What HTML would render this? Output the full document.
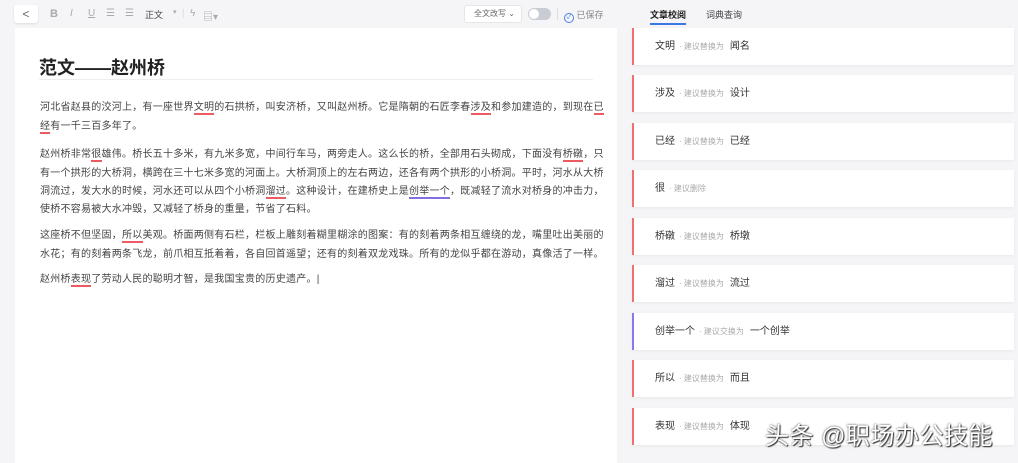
<!DOCTYPE html>
<html><head><meta charset="utf-8"><style>
*{margin:0;padding:0;box-sizing:border-box}
body{width:1018px;height:463px;background:#f5f5f7;font-family:"Liberation Sans","Noto Sans CJK SC",sans-serif;color:#333;position:relative;overflow:hidden}
.tb{position:absolute;top:0;left:0;height:28px;width:620px}
.back{position:absolute;left:14px;top:5px;width:24px;height:18px;background:#fff;border-radius:3px;box-shadow:0 1px 2px rgba(0,0,0,.1);font-size:12px;color:#666;text-align:center;line-height:18px}
.ti{position:absolute;top:8px;font-size:10px;color:#aaa}
.ed{position:absolute;left:15px;top:28px;width:602px;height:435px;background:#fff}
h1{position:absolute;left:24px;top:26px;font-size:18px;font-weight:bold;color:#222}
.hr{position:absolute;left:24px;right:24px;top:51px;border-top:1px solid #eee}
.t{position:absolute;left:25px;font-size:10px;letter-spacing:0.25px;color:#444;white-space:nowrap;line-height:14px}
u{text-decoration:none;border-bottom:2px solid #ee5a62}
u.p{border-color:#8070e0}
.card{position:absolute;left:632px;width:382px;height:37px;background:#fff;border-left:2px solid #f07070;box-shadow:0 1px 3px rgba(0,0,0,.06);font-size:10px;line-height:37px;padding-left:21px;color:#333}
.card.pu{border-color:#8877ee}
.card s{text-decoration:none;color:#aaa;font-size:8px;margin:0 6px 0 4px}
.wm{position:absolute;left:765px;top:416px;font-size:24px;color:#fff;text-shadow:1px 1px 1px #333,0 0 2px #333;letter-spacing:0.5px}
</style></head><body>
<div class="tb">
<div class="back">&lt;</div>
<span class="ti" style="left:50px;font-weight:bold;font-size:11px">B</span>
<span class="ti" style="left:70px;font-style:italic">I</span>
<span class="ti" style="left:88px;text-decoration:underline">U</span>
<span class="ti" style="left:106px">☰</span>
<span class="ti" style="left:125px">☰</span>
<span class="ti" style="left:145px;color:#444;font-size:9px">正文</span>
<span class="ti" style="left:173px;font-size:7px">▾</span>
<span class="ti" style="left:182px;color:#ddd">|</span>
<span class="ti" style="left:190px">ϟ</span>
<span class="ti" style="left:203px">▤▾</span>
</div>
<div style="position:absolute;left:464px;top:5px;width:58px;height:18px;background:#fff;border:1px solid #e6e6e6;border-radius:3px;font-size:8px;color:#666;line-height:16px;padding-left:9px">全文改写 ⌄</div>
<div style="position:absolute;left:528px;top:8px;width:23px;height:12px;background:#c9ccd3;border-radius:6px"><div style="position:absolute;left:1px;top:1px;width:10px;height:10px;border-radius:50%;background:#fff"></div></div>
<div style="position:absolute;left:557px;top:8px;height:12px;border-left:1px solid #ddd"></div>
<div style="position:absolute;left:564px;top:8px;font-size:9px;color:#888"><span style="display:inline-block;width:10px;height:10px;border:1px solid #4a7fe0;border-radius:50%;font-size:7px;color:#4a7fe0;text-align:center;line-height:8px;vertical-align:-1px">✓</span> 已保存</div>
<div style="position:absolute;left:650px;top:8px;font-size:9px;color:#222;font-weight:bold;border-bottom:2px solid #3b78e7;padding-bottom:2px">文章校阅</div>
<div style="position:absolute;left:706px;top:8px;font-size:9px;color:#444">词典查询</div>
<div class="ed">
<h1>范文——赵州桥</h1><div class="hr"></div>
<div class="t" style="top:73px">河北省赵县的洨河上，有一座世界<u>文明</u>的石拱桥，叫安济桥，又叫赵州桥。它是隋朝的石匠李春<u>涉及</u>和参加建造的，到现在<u>已</u></div>
<div class="t" style="top:92px"><u>经</u>有一千三百多年了。</div>
<div class="t" style="top:120px">赵州桥非常<u>很</u>雄伟。桥长五十多米，有九米多宽，中间行车马，两旁走人。这么长的桥，全部用石头砌成，下面没有<u>桥礅</u>，只</div>
<div class="t" style="top:139px">有一个拱形的大桥洞，横跨在三十七米多宽的河面上。大桥洞顶上的左右两边，还各有两个拱形的小桥洞。平时，河水从大桥</div>
<div class="t" style="top:157px">洞流过，发大水的时候，河水还可以从四个小桥洞<u>溜过</u>。这种设计，在建桥史上是<u class="p">创举一个</u>，既减轻了流水对桥身的冲击力，</div>
<div class="t" style="top:175px">使桥不容易被大水冲毁，又减轻了桥身的重量，节省了石料。</div>
<div class="t" style="top:201px">这座桥不但坚固，<u>所以</u>美观。桥面两侧有石栏，栏板上雕刻着糊里糊涂的图案：有的刻着两条相互缠绕的龙，嘴里吐出美丽的</div>
<div class="t" style="top:220px">水花；有的刻着两条飞龙，前爪相互抵着着，各自回首遥望；还有的刻着双龙戏珠。所有的龙似乎都在游动，真像活了一样。</div>
<div class="t" style="top:245px">赵州桥<u>表现</u>了劳动人民的聪明才智，是我国宝贵的历史遗产。|</div>
</div>
<div class="card" style="top:28px">文明<s>· 建议替换为</s>闻名</div>
<div class="card" style="top:75px">涉及<s>· 建议替换为</s>设计</div>
<div class="card" style="top:123px">已经<s>· 建议替换为</s>已经</div>
<div class="card" style="top:170px">很<s>· 建议删除</s></div>
<div class="card" style="top:218px">桥礅<s>· 建议替换为</s>桥墩</div>
<div class="card" style="top:265px">溜过<s>· 建议替换为</s>流过</div>
<div class="card pu" style="top:313px">创举一个<s>· 建议交换为</s>一个创举</div>
<div class="card" style="top:360px">所以<s>· 建议替换为</s>而且</div>
<div class="card" style="top:408px">表现<s>· 建议替换为</s>体现</div>
<div class="wm">头条 @职场办公技能</div>
</body></html>
